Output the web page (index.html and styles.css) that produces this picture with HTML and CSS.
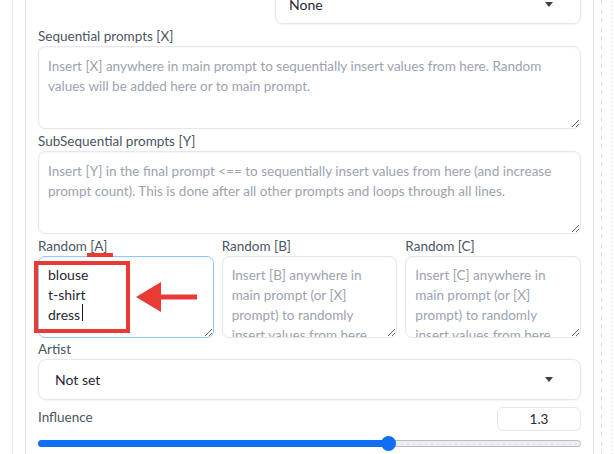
FILE: index.html
```html
<!DOCTYPE html>
<html>
<head>
<meta charset="utf-8">
<link rel="stylesheet" href="styles.css">
</head>
<body>
<div class="shell">
  <div class="gutter"></div>
  <div class="rail">
    <div class="panel">
      <div class="top-select">
        <span>None</span>
        <span class="caret-down"></span>
      </div>

      <div class="field">
        <label class="lbl">Sequential prompts [X]</label>
        <textarea class="ta ta-big" placeholder="Insert [X] anywhere in main prompt to sequentially insert values from here. Random values will be added here or to main prompt."></textarea>
      </div>

      <div class="field">
        <label class="lbl">SubSequential prompts [Y]</label>
        <textarea class="ta ta-big" placeholder="Insert [Y] in the final prompt <== to sequentially insert values from here (and increase prompt count). This is done after all other prompts and loops through all lines."></textarea>
      </div>

      <div class="random-row">
        <div class="field">
          <label class="lbl">Random [A]</label>
          <textarea class="ta ta-small ta-focus">blouse
t-shirt
dress</textarea>
        </div>
        <div class="field">
          <label class="lbl">Random [B]</label>
          <textarea class="ta ta-small" placeholder="Insert [B] anywhere in main prompt (or [X] prompt) to randomly insert values from here."></textarea>
        </div>
        <div class="field">
          <label class="lbl">Random [C]</label>
          <textarea class="ta ta-small" placeholder="Insert [C] anywhere in main prompt (or [X] prompt) to randomly insert values from here."></textarea>
        </div>
        <span class="text-caret"></span>
        <svg class="annot" width="200" height="110" viewBox="0 0 200 110">
          <rect x="49" y="17" width="26" height="4" fill="#e93a35"/>
          <rect x="-2" y="27" width="92" height="68" fill="none" stroke="#e93a35" stroke-width="4"/>
          <rect x="120" y="58.5" width="39" height="5" fill="#e93a35"/>
          <polygon points="98,61 123,46 123,76" fill="#e93a35"/>
        </svg>
      </div>

      <div class="field field-artist">
        <label class="lbl">Artist</label>
        <div class="select">
          <span>Not set</span>
          <span class="caret-down"></span>
        </div>
      </div>

      <div class="influence">
        <div class="influence-head">
          <label class="lbl">Influence</label>
          <div class="num">1.3</div>
        </div>
        <div class="slider">
          <div class="slider-fill" style="width: 350px"></div>
          <div class="slider-thumb" style="left: 342px"></div>
        </div>
      </div>
    </div>
  </div>
  <div class="side">
    <div class="dash"></div>
    <div class="dots"></div>
  </div>
</div>
</body>
</html>
```

FILE: styles.css
```css
* { box-sizing: border-box; }

html, body {
  margin: 0;
  padding: 0;
  background: #ffffff;
}

body {
  width: 615px;
  height: 454px;
  overflow: hidden;
  font-family: "Lato", "Noto Sans", sans-serif;
  font-size: 13.5px;
  color: #1f2937;
}

.shell {
  display: flex;
  height: 454px;
}

.gutter {
  width: 12px;
  flex: none;
}

.rail {
  border-left: 1px solid #e5e7eb;
  padding-left: 12px;
  flex: none;
  width: 582px;
}

.panel {
  border-left: 1px solid #e5e7eb;
  border-right: 1px solid #e5e7eb;
  padding: 0 12px;
  height: 454px;
  display: flex;
  flex-direction: column;
  gap: 2px;
}

.side {
  flex: 1;
  display: flex;
  padding-left: 7px;
  gap: 8px;
}

.dash {
  width: 1px;
  height: 454px;
  background: repeating-linear-gradient(to bottom, #dcdfe4 0 5px, transparent 5px 9px);
}

.dots {
  flex: 1;
  height: 454px;
  background-image: radial-gradient(#eef0f3 1px, transparent 1.2px);
  background-size: 4px 4px;
}

.top-select {
  margin-top: -15px;
  height: 39px;
  width: 306px;
  margin-left: auto;
  border: 1px solid #e5e7eb;
  border-radius: 8px;
  box-shadow: 0 1px 2px rgba(0,0,0,0.05);
  display: flex;
  align-items: center;
  justify-content: space-between;
  padding: 0 27px 0 13px;
  font-size: 14px;
  color: #1f2937;
}

.caret-down {
  width: 0;
  height: 0;
  border-left: 4.5px solid transparent;
  border-right: 4.5px solid transparent;
  border-top: 5px solid #374151;
}

.field {
  display: flex;
  flex-direction: column;
}

.lbl {
  display: block;
  line-height: 20px;
  height: 20px;
  color: #4b5563;
  font-size: 13.5px;
}

.ta {
  display: block;
  width: 100%;
  border: 1px solid #e5e7eb;
  border-radius: 7px;
  box-shadow: inset 0 1px 2px rgba(0,0,0,0.04);
  padding: 9px 9px;
  font-family: inherit;
  font-size: 13.5px;
  line-height: 20px;
  color: #1f2937;
  background: #ffffff;
  outline: none;
  overflow: hidden;
}

.ta::placeholder {
  color: #9ca3af;
}

.ta-big {
  height: 83px;
}

.ta-small {
  height: 82px;
  padding-top: 8px;
}

.ta-focus {
  border-color: #93c5fd;
  font-size: 14px;
}

.random-row {
  position: relative;
  display: grid;
  grid-template-columns: 1fr 1fr 1fr;
  column-gap: 8px;
}

.annot {
  position: absolute;
  left: 0;
  top: 0;
  overflow: visible;
  pointer-events: none;
}

.text-caret {
  position: absolute;
  left: 44px;
  top: 68px;
  width: 1px;
  height: 17px;
  background: #111827;
}

.field-artist .lbl {
  margin-top: -1px;
  margin-bottom: 0;
}

.select {
  height: 41px;
  border: 1px solid #e5e7eb;
  border-radius: 8px;
  box-shadow: 0 1px 2px rgba(0,0,0,0.05);
  display: flex;
  align-items: center;
  justify-content: space-between;
  padding: 0 27px 0 16px;
  font-size: 14px;
  color: #1f2937;
}

.influence {
  margin-top: 5px;
  display: flex;
  flex-direction: column;
}

.influence-head {
  display: flex;
  justify-content: space-between;
  align-items: center;
  height: 25px;
}

.influence-head .lbl {
  margin-top: -6px;
}

.num {
  width: 84px;
  height: 24px;
  margin-top: -2px;
  border: 1px solid #e5e7eb;
  border-radius: 6px;
  display: flex;
  align-items: center;
  justify-content: center;
  font-size: 13.5px;
  color: #1f2937;
}

.slider {
  position: relative;
  margin-top: 8px;
  height: 7px;
  border-radius: 4px;
  border: 1px solid #b8bcc4;
  background-color: #eceef1;
  background-image: radial-gradient(#d5d8dd 0.8px, transparent 1px);
  background-size: 6px 7px;
}

.slider-fill {
  position: absolute;
  left: -1px;
  top: -1px;
  height: 7px;
  border-radius: 4px;
  background: #0f6ff2;
}

.slider-thumb {
  position: absolute;
  top: -5px;
  width: 15px;
  height: 15px;
  border-radius: 50%;
  background: #0f6ff2;
}
```
